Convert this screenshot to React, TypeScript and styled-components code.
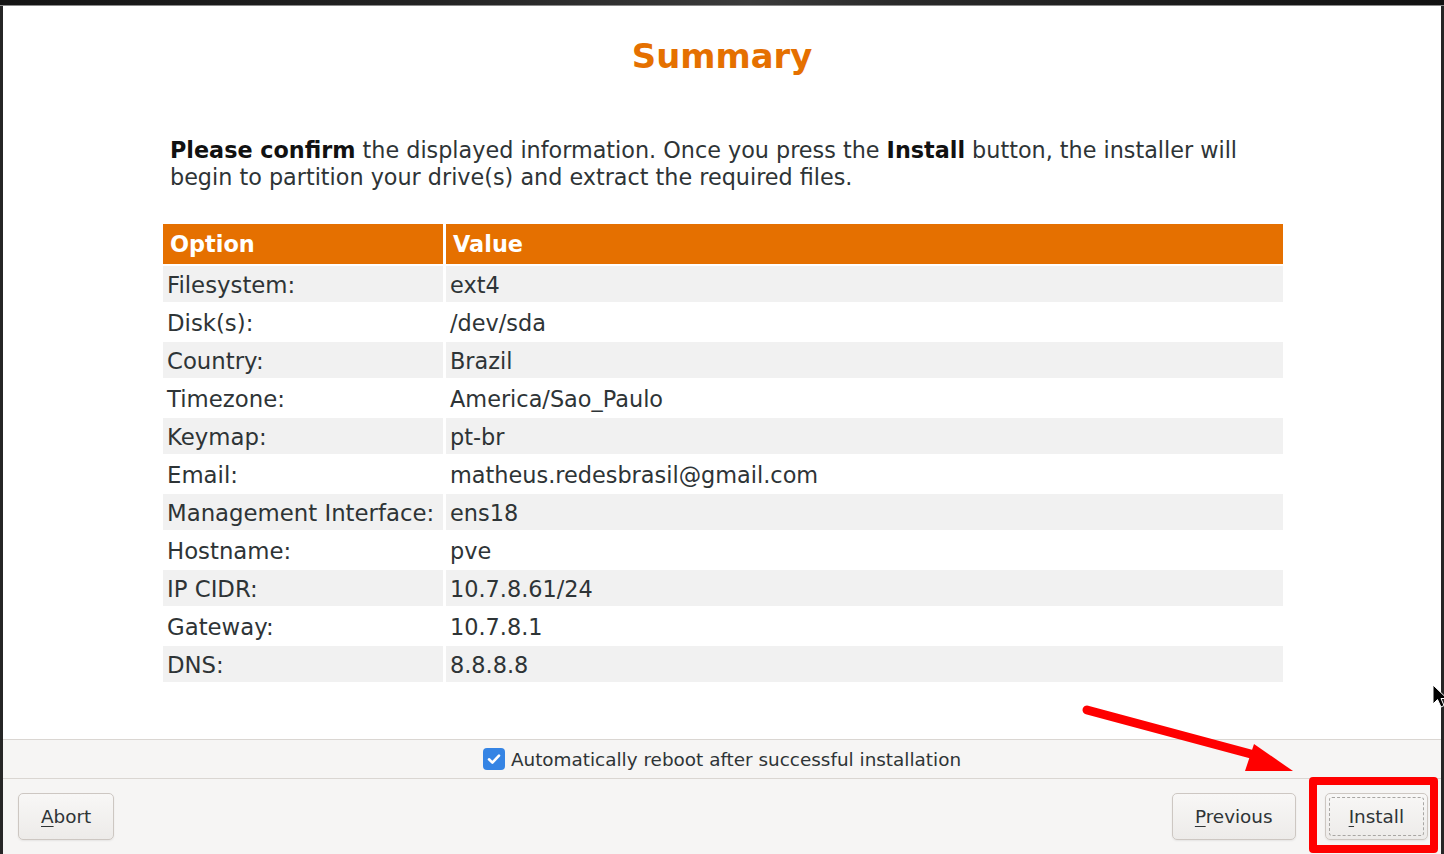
import React from 'react';
import styled, { createGlobalStyle } from 'styled-components';

const Global = createGlobalStyle`
  html, body { margin: 0; padding: 0; background: #1b1b1b; }
  body { font-family: "DejaVu Sans", "Noto Sans", sans-serif; }
  * { box-sizing: border-box; }
`;

const Screen = styled.div`
  position: relative;
  width: 1444px;
  height: 854px;
  overflow: hidden;
  background: #262626;
  display: flex;
  flex-direction: column;
`;

const TopStrip = styled.div`
  flex-shrink: 0;
  height: 6px;
  background: linear-gradient(90deg, #141414, #232323 30%, #3b3b3b 52%, #2a2a2a 62%, #1a1a1a 85%, #111);
  border-bottom: 1px solid #8a8a8a;
`;

const Window = styled.div`
  flex: 1;
  display: flex;
  flex-direction: column;
  margin: 0 3px;
  background: #ffffff;
  min-height: 0;
`;

const Main = styled.main`
  flex: 1;
  display: flex;
  flex-direction: column;
  padding-top: 32px;
  color: #2e3436;
`;

const Title = styled.h1`
  margin: 0;
  text-align: center;
  font-size: 33.8px;
  line-height: 38px;
  font-weight: bold;
  color: #e57000;
`;

const Intro = styled.p`
  margin: 61px 0 0 167px;
  width: 1110px;
  font-size: 22.3px;
  line-height: 27px;
  color: #2e3436;
  b { color: #111; }
`;

const Table = styled.div`
  margin: 33px 0 0 160px;
  display: grid;
  grid-template-columns: 280px 837px;
  column-gap: 3px;
  row-gap: 2px;
`;

const HeadCell = styled.div`
  height: 40px;
  display: flex;
  align-items: center;
  padding-left: 7px;
  background: #e57000;
  color: #ffffff;
  font-weight: bold;
  font-size: 22.4px;
`;

const Cell = styled.div<{ $shade: boolean; $value?: boolean }>`
  height: 36px;
  display: flex;
  align-items: center;
  padding: 1px 0 0 4px;
  background: ${p => (p.$shade ? '#f1f1f1' : '#ffffff')};
  font-size: ${p => (p.$value ? '22.4px' : '22.8px')};
  color: #2e3436;
  white-space: nowrap;
`;

const CheckBar = styled.div`
  flex-shrink: 0;
  height: 39px;
  border-top: 1px solid #dad6d2;
  background: #f6f5f4;
  display: flex;
  align-items: center;
  justify-content: center;
  gap: 6px;
  font-size: 18.4px;
  color: #2e3436;
`;

const CheckBox = styled.span`
  width: 22px;
  height: 22px;
  border-radius: 4px;
  background: #3584e4;
  display: inline-flex;
  align-items: center;
  justify-content: center;
`;

const ButtonBar = styled.div`
  flex-shrink: 0;
  height: 76px;
  border-top: 1px solid #dad6d2;
  background: #f6f5f4;
  display: flex;
  align-items: center;
  padding: 0 13px 0 15px;
  gap: 29px;
`;

const Spacer = styled.div`
  flex: 1;
`;

const Button = styled.button<{ $focused?: boolean }>`
  position: relative;
  height: 47px;
  padding: 0 ${p => (p.$focused ? '23px' : '22px')};
  border: 1px solid #cdc7c2;
  border-radius: 5px;
  background: linear-gradient(#f8f7f6, #edebe9);
  box-shadow: 0 1px 2px rgba(0, 0, 0, 0.07);
  font-family: "DejaVu Sans", sans-serif;
  font-size: 18.4px;
  color: #2e3436;
  u { text-decoration-thickness: 1px; text-underline-offset: 3px; }
  ${p =>
    p.$focused
      ? `&::after { content: ''; position: absolute; inset: 3px; border: 1px dashed #a8a6a3; border-radius: 3px; }`
      : ''}
`;

const Highlight = styled.div`
  position: absolute;
  left: 1309px;
  top: 777px;
  width: 129px;
  height: 76px;
  border: 8px solid #ff0000;
  border-radius: 4px;
  pointer-events: none;
`;

const Overlay = styled.svg`
  position: absolute;
  left: 0;
  top: 0;
  pointer-events: none;
`;

const rows: [string, string][] = [
  ['Filesystem:', 'ext4'],
  ['Disk(s):', '/dev/sda'],
  ['Country:', 'Brazil'],
  ['Timezone:', 'America/Sao_Paulo'],
  ['Keymap:', 'pt-br'],
  ['Email:', 'matheus.redesbrasil@gmail.com'],
  ['Management Interface:', 'ens18'],
  ['Hostname:', 'pve'],
  ['IP CIDR:', '10.7.8.61/24'],
  ['Gateway:', '10.7.8.1'],
  ['DNS:', '8.8.8.8'],
];

export default function App() {
  return (
    <>
      <Global />
      <Screen>
        <TopStrip />
        <Window>
          <Main>
            <Title>Summary</Title>
            <Intro>
              <b>Please confirm</b> the displayed information. Once you press the <b>Install</b> button, the
              installer will begin to partition your drive(s) and extract the required files.
            </Intro>
            <Table>
              <HeadCell>Option</HeadCell>
              <HeadCell>Value</HeadCell>
              {rows.map(([k, v], i) => (
                <React.Fragment key={k}>
                  <Cell $shade={i % 2 === 0}>{k}</Cell>
                  <Cell $shade={i % 2 === 0} $value>
                    {v}
                  </Cell>
                </React.Fragment>
              ))}
            </Table>
          </Main>
          <CheckBar>
            <CheckBox>
              <svg width="16" height="16" viewBox="0 0 16 16">
                <path d="M3 8.3 L6.4 11.6 L13 4.6" fill="none" stroke="#fff" strokeWidth="2.6" strokeLinecap="round" strokeLinejoin="round" />
              </svg>
            </CheckBox>
            <span>Automatically reboot after successful installation</span>
          </CheckBar>
          <ButtonBar>
            <Button>
              <u>A</u>bort
            </Button>
            <Spacer />
            <Button>
              <u>P</u>revious
            </Button>
            <Button $focused>
              <u>I</u>nstall
            </Button>
          </ButtonBar>
        </Window>
        <Highlight />
        <Overlay width="1444" height="854" viewBox="0 0 1444 854">
          <line x1="1087" y1="710" x2="1262" y2="757" stroke="#ff0000" strokeWidth="9" strokeLinecap="round" />
          <polygon points="1254,744 1245,771 1293,771" fill="#ff0000" />
          <path
            d="M1433 685 L1433 704 L1437.5 699.5 L1441 707 L1444 705.5 L1441 698.5 L1447 698.5 Z"
            fill="#000"
            stroke="#fff"
            strokeWidth="1"
          />
        </Overlay>
      </Screen>
    </>
  );
}
